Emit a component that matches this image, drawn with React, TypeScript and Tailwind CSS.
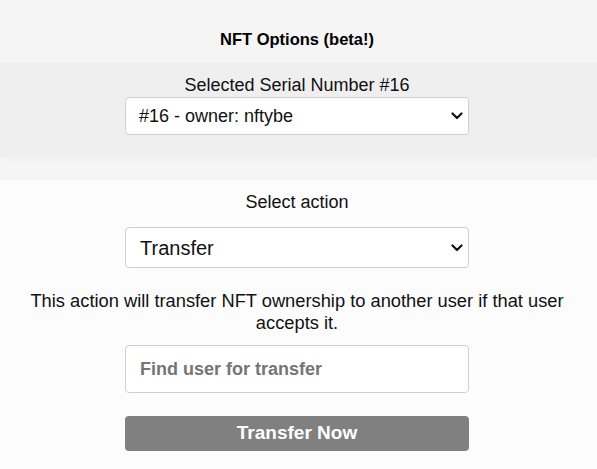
import React from "react";

function Chevron() {
  return (
    <svg width="12" height="8" viewBox="0 0 12 8" className="shrink-0">
      <path d="M1.5 1.5 L6 6 L10.5 1.5" fill="none" stroke="#111" strokeWidth="2.2" strokeLinecap="round" strokeLinejoin="round" />
    </svg>
  );
}

export default function App() {
  return (
    <div className="min-h-[469px] w-full bg-[#f5f5f5] font-['Liberation_Sans',Arial,sans-serif] text-[#111] flex flex-col">
      <div className="h-[63px] flex justify-center pt-[30px] pr-[3px]">
        <h1 className="text-[16.5px] leading-[18px] font-bold text-black">NFT Options (beta!)</h1>
      </div>
      <div className="h-[94px] bg-[#efefef] flex flex-col items-center pt-[12px] pr-[3px] shadow-[0_2px_6px_rgba(0,0,0,0.02)]">
        <div className="text-[18px] leading-[20px]">Selected Serial Number #16</div>
        <div className="mt-[2px] w-[344px] h-[38px] bg-white border border-[#cfcfcf] rounded-[4px] flex items-center justify-between pl-[13px] pr-[5px]">
          <span className="text-[18px]">#16 - owner: nftybe</span>
          <Chevron />
        </div>
      </div>
      <div className="h-[23px]" />
      <div className="flex-1 bg-[#fcfcfc] flex flex-col items-center pt-[12px] pr-[3px]">
        <div className="text-[18px] leading-[20px]">Select action</div>
        <div className="mt-[15px] w-[344px] h-[41px] bg-white border border-[#cfcfcf] rounded-[4px] flex items-center justify-between pl-[14px] pr-[5px]">
          <span className="text-[20px]">Transfer</span>
          <Chevron />
        </div>
        <p className="mt-[22px] px-[20px] text-center text-[18.3px] leading-[22px]">
          This action will transfer NFT ownership to another user if that user accepts it.
        </p>
        <div className="mt-[11px] w-[344px] h-[48px] bg-white border border-[#cfcfcf] rounded-[4px] flex items-center pl-[14px]">
          <span className="text-[18px] font-bold text-[#757575]">Find user for transfer</span>
        </div>
        <button className="mt-[23px] w-[344px] h-[35px] bg-[#808080] rounded-[4px] text-white font-bold text-[19px] flex items-center justify-center">
          Transfer Now
        </button>
      </div>
    </div>
  );
}
